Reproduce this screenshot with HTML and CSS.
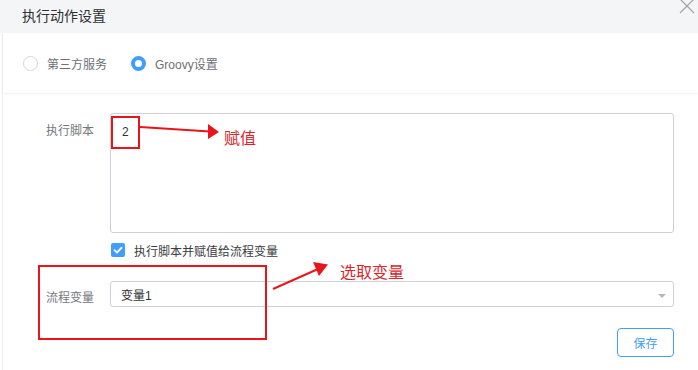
FILE: index.html
```html
<!DOCTYPE html>
<html lang="zh-CN">
  <head>
    <meta charset="UTF-8" />
    <title>执行动作设置</title>
    <link rel="stylesheet" href="styles.css">
  </head>
  <body>
    <div class="dialog">
      <div class="dialog-header">
        <span class="dialog-title">执行动作设置</span>
        <svg class="close-icon" width="16" height="16" viewBox="0 0 16 16">
          <path d="M1 1 L15 15 M15 1 L1 15" stroke="#a0a3a8" stroke-width="1.2" fill="none" />
        </svg>
      </div>

      <div class="dialog-body">
        <div class="radio-bar">
          <label class="radio">
            <span class="radio-dot"></span>
            <span class="radio-text">第三方服务</span>
          </label>
          <label class="radio checked">
            <span class="radio-dot"></span>
            <span class="radio-text">Groovy设置</span>
          </label>
        </div>

        <div class="form">
          <div class="form-row">
            <div class="form-label label-top">执行脚本</div>
            <textarea class="script-input">2</textarea>
          </div>

          <div class="check-row">
            <span class="checkbox">
              <svg width="14" height="14" viewBox="0 0 14 14">
                <path d="M3.5 7.2 L6 9.6 L10.6 4.6" stroke="#fff" stroke-width="1.8" fill="none" stroke-linecap="round" stroke-linejoin="round" />
              </svg>
            </span>
            <span class="check-text">执行脚本并赋值给流程变量</span>
          </div>

          <div class="form-row select-row">
            <div class="form-label label-mid">流程变量</div>
            <div class="select">
              <span>变量1</span>
              <span class="caret"></span>
            </div>
          </div>

          <div class="actions">
            <button class="btn-save">保存</button>
          </div>
        </div>
      </div>

      <!-- annotations drawn over the screenshot -->
      <svg class="marks" width="698" height="370" viewBox="0 0 698 370">
        <rect x="112" y="117" width="27" height="31" fill="none" stroke="#e8151b" stroke-width="2" />
        <path d="M140 127 L210 131.5" stroke="#e8151b" stroke-width="2" fill="none" />
        <path d="M219 132 L208 124 L208 139 Z" fill="#e8151b" />
        <rect x="39" y="266" width="227" height="73" fill="none" stroke="#e8151b" stroke-width="2" />
        <path d="M273 289 L318 269" stroke="#e8151b" stroke-width="2" fill="none" />
        <path d="M328 264.5 L313 262 L319 276 Z" fill="#e8151b" />
      </svg>
      <span class="note note-assign">赋值</span>
      <span class="note note-pick">选取变量</span>
    </div>
  </body>
</html>
```

FILE: styles.css
```css
* {
  box-sizing: border-box;
}
body {
  margin: 0;
  background-color: #fff;
  font-family: "Liberation Sans", "Noto Sans CJK SC", sans-serif;
  color: #606266;
}
.dialog {
  position: relative;
  width: 698px;
  height: 370px;
  overflow: hidden;
}
.dialog-header {
  height: 33px;
  display: flex;
  align-items: center;
  padding-left: 22px;
  background-color: #f4f5f7;
}
.dialog-title {
  font-size: 14px;
  color: #303133;
  margin-top: -4px;
}
.close-icon {
  position: absolute;
  left: 679px;
  top: -2px;
}
.dialog-body {
  margin-left: 2px;
  border-left: 1px solid #ebedf0;
  height: 337px;
}
.radio-bar {
  height: 60px;
  display: flex;
  align-items: center;
  gap: 24px;
  padding-left: 20px;
  box-shadow: 0 1px 2px rgba(0, 0, 0, 0.07);
}
.radio {
  display: flex;
  align-items: center;
  gap: 9px;
  font-size: 12px;
  color: #6e7075;
}
.radio-dot {
  width: 15px;
  height: 15px;
  border-radius: 50%;
  border: 1px solid #d3d6dc;
  background-color: #fff;
}
.radio.checked .radio-dot {
  border: 4px solid #409eff;
}
.form {
  padding: 20px 24px 0 0;
}
.form-row {
  display: flex;
}
.form-label {
  width: 107px;
  padding-right: 16px;
  text-align: right;
  font-size: 12px;
  color: #75787d;
  flex-shrink: 0;
}
.label-top {
  padding-top: 9px;
  line-height: 18px;
}
.label-mid {
  padding-top: 4px;
  line-height: 26px;
}
.script-input {
  flex: 1;
  height: 120px;
  margin: 0;
  padding: 9px 11px;
  border: 1px solid #cdd0d6;
  border-radius: 3px;
  font-family: "Liberation Sans", "Noto Sans CJK SC", sans-serif;
  font-size: 12px;
  line-height: 18px;
  color: #333;
  resize: none;
  outline: none;
}
.check-row {
  display: flex;
  align-items: center;
  gap: 9px;
  margin: 10px 0 0 108px;
  height: 14px;
}
.checkbox {
  width: 14px;
  height: 14px;
  border-radius: 2px;
  background-color: #409eff;
  display: flex;
}
.check-text {
  font-size: 12px;
  color: #3a3c40;
}
.select-row {
  margin-top: 24px;
}
.select {
  flex: 1;
  height: 26px;
  display: flex;
  align-items: center;
  justify-content: space-between;
  padding: 0 7px 0 10px;
  border: 1px solid #cdd0d6;
  border-radius: 3px;
  font-size: 12px;
  color: #303133;
}
.caret {
  width: 0;
  height: 0;
  border-left: 4px solid transparent;
  border-right: 4px solid transparent;
  border-top: 4px solid #b4b7bd;
  margin-top: 3px;
}
.actions {
  display: flex;
  justify-content: flex-end;
  margin-top: 17px;
}
.btn-save {
  width: 57px;
  height: 29px;
  padding: 0;
  border: 1px solid #409eff;
  border-radius: 4px;
  background-color: #fff;
  color: #409eff;
  font-family: "Liberation Sans", "Noto Sans CJK SC", sans-serif;
  font-size: 12px;
}
.marks {
  position: absolute;
  left: 0;
  top: 0;
  pointer-events: none;
}
.note {
  position: absolute;
  font-family: "Noto Sans CJK SC", sans-serif;
  font-size: 16px;
  line-height: 20px;
  color: #d9262c;
}
.note-assign {
  left: 224px;
  top: 127px;
}
.note-pick {
  left: 340px;
  top: 261px;
}
```
